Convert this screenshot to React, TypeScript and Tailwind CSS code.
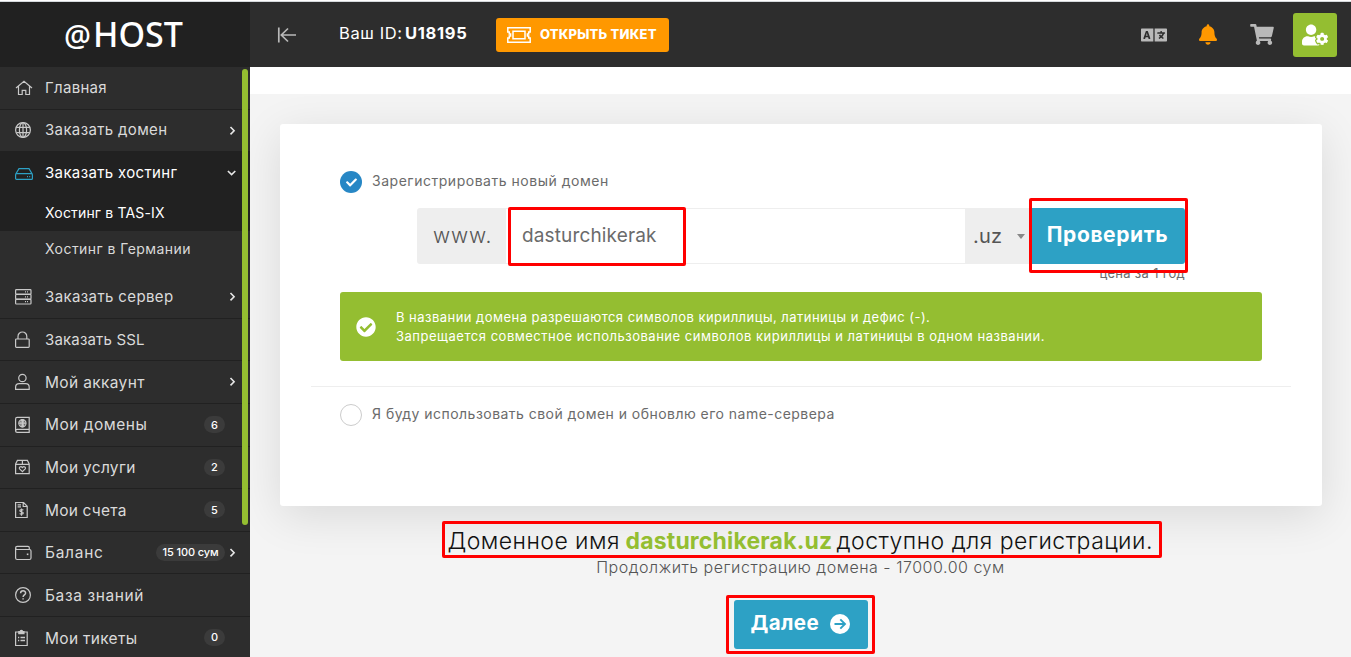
import type { ReactNode } from "react";
import { FaBell, FaCheck, FaCheckCircle, FaLanguage, FaShoppingCart, FaUserCog } from "react-icons/fa";

function Icon({ children, className = "" }: { children: ReactNode; className?: string }) {
  return (
    <svg width="18" height="18" viewBox="0 0 18 18" fill="none" stroke="currentColor" strokeWidth="1.2" className={`shrink-0 ${className}`}>
      {children}
    </svg>
  );
}

const icons = {
  home: <><path d="M1 9 9 2.3 17 9M3.5 7.3v8.2h3.7v-4.2h3.6v4.2h3.7V7.3" /></>,
  globe: <><circle cx="8" cy="9" r="7.4" /><ellipse cx="8" cy="9" rx="3.6" ry="7.4" /><path d="M8 1.500v15M1.300 6.300h13.400M1.300 11.700h13.400" /></>,
  drive: <><path d="M.6 9.2 4 3.6h10l3.4 5.6M1.6 8.6h14.8a1 1 0 0 1 1 1v3.8a1 1 0 0 1-1 1H1.6a1 1 0 0 1-1-1V9.6a1 1 0 0 1 1-1ZM12 11.6h1M14.2 11.6h1" /></>,
  server: <><rect x=".6" y="1.6" width="15.4" height="4.6" rx=".8" /><rect x=".6" y="6.5" width="15.4" height="4.6" rx=".8" /><rect x=".6" y="11.4" width="15.4" height="4.6" rx=".8" /><path d="M10 3.9h1M12 3.9h1M10 8.8h1M12 8.8h1M10 13.7h1M12 13.7h1" /></>,
  lock: <><rect x=".6" y="8" width="13.6" height="8.4" rx=".8" /><path d="M3 8V5.400a4.400 4.400 0 0 1 8.800 0V8" /></>,
  user: <><circle cx="7.400" cy="5" r="3.700" /><path d="M.6 16.400v-2.200c0-2.200 1.400-3.600 3.600-3.600h6.400c2.200 0 3.600 1.400 3.600 3.600v2.200Z" /></>,
  book: <><path d="M14.200 13.400H2.200C1.200 13.400.6 14 .6 15s.6 1.400 1.600 1.400h12V1.300h-12C1.200 1.300.6 2 .6 3v12" /><circle cx="7.400" cy="7.200" r="3.600" /><ellipse cx="7.400" cy="7.200" rx="1.500" ry="3.600" /><path d="M3.800 7.200h7.200M7.400 3.600v7.200" /></>,
  box: <><path d="M.6 6 2.400 2.400h10L14.200 6v9.600H.6ZM.6 6.400h13.600M7.400 2.400v3.800" /><path d="M7.400 13.600 4.600 10.900C3.600 9.600 5.600 7.500 7.400 9.500c1.800-2 3.800.1 2.800 1.400Z" /></>,
  invoice: <><path d="M.6 1.500h8l3.600 3.800v11.200H.6ZM8.200 1.500v4h4M2.600 3.900h3.400M2.600 5.900h3.400" /><path d="M8.300 9.300c-.4-.8-3.500-1-3.500.5 0 1.600 3.500.7 3.500 2.300 0 1.500-3.100 1.300-3.600.3M6.500 7.400v7.400" /></>,
  wallet: <><path d="M14.300 5V3.800c0-.9-.5-1.400-1.400-1.400H2.200C1.200 2.400.6 3 .6 4s.6 1.500 1.600 1.500h12.200c1 0 1.600.6 1.600 1.500v7c0 1-.6 1.500-1.600 1.500H2.200C1.200 15.500.6 15 .6 14V4" /><path strokeWidth="1.600" d="M11.800 10.300h1.600" /></>,
  help: <><circle cx="8" cy="9" r="7.400" /><path strokeWidth="1.500" d="M5.600 7.200c0-3.300 5-3.200 5-.2 0 2-2.500 1.900-2.500 4M8.100 12.200v1.400" /></>,
  clipboard: <><path d="M3.800 3H.6v13.500h11.600V3H9" /><path fill="currentColor" d="M3.800 2.600h1.400c0-1.600 2.400-1.600 2.400 0H9v2H3.800Z" /><path strokeWidth="1.500" d="M3 8.500h1.200M5.500 8.500h4.500M3 11.500h1.200M5.500 11.500h4.500" /></>,
};

function Chevron({ down = false }: { down?: boolean }) {
  return (
    <svg width="10" height="10" viewBox="0 0 10 10" fill="none" stroke="currentColor" strokeWidth="1.600" className="absolute top-[16px] right-[13px] text-[#e6e6e6]">
      {down ? <path d="m.9 3 3.700 3.600L8.300 3" /> : <path d="m3.500 1 3.600 3.700-3.600 3.700" />}
    </svg>
  );
}

interface RowProps {
  icon: keyof typeof icons;
  label: string;
  text: string;
  badge?: string;
  arrow?: boolean;
  wide?: boolean;
}

function Row({ icon, label, text, badge, arrow, wide }: RowProps) {
  return (
    <a className="relative flex h-[42.6px] shrink-0 items-center gap-3 border-b border-[#212121] pl-[15px] whitespace-nowrap text-[#dadada]">
      <Icon className="text-[#c8c8c8]">{icons[icon]}</Icon>
      <span className={text}>{label}</span>
      {badge && (
        <span className={`mr-[25px] ml-auto flex h-[17px] items-center justify-center rounded-full bg-[#3b3b3b] text-[11px] font-medium text-white ${wide ? "w-[69px] tracking-[-0.100px]" : "w-[21px]"}`}>
          {badge}
        </span>
      )}
      {arrow && <Chevron />}
    </a>
  );
}

function Sidebar() {
  return (
    <aside className="relative flex w-[250px] shrink-0 flex-col overflow-hidden bg-[#2d2d2d]">
      <div className="flex h-[65px] shrink-0 items-center bg-[#212121] pb-px pl-[64px] font-['Noto_Sans'] text-white">
        <span className="mt-[3px] text-[30px] leading-none font-medium">@</span>
        <span className="ml-[2px] text-[34px] leading-none font-medium">HOST</span>
      </div>
      <Row icon="home" label="Главная" text="text-[15px] tracking-[0.300px]" />
      <Row icon="globe" label="Заказать домен" text="text-[15px] tracking-[0.350px]" arrow />
      <div className="h-[79px] shrink-0 bg-[#212121] text-white">
        <a className="relative flex h-[43px] items-center gap-3 pl-[15px] text-[15px] whitespace-nowrap">
          <Icon className="text-[#2da1c5]">{icons.drive}</Icon>
          <span className="tracking-[0.350px]">Заказать хостинг</span>
          <Chevron down />
        </a>
        <a className="flex h-[35px] items-center pl-[45px] text-[14px] tracking-[0.170px]">Хостинг в TAS-IX</a>
      </div>
      <a className="mb-[10px] flex h-[35px] shrink-0 items-center pl-[45px] text-[14px] tracking-[0.450px] text-[#dadada]">Хостинг в Германии</a>
      <Row icon="server" label="Заказать сервер" text="pt-px text-[15px] tracking-[0.385px]" arrow />
      <Row icon="lock" label="Заказать SSL" text="pt-px text-[15px] tracking-[0.170px]" />
      <Row icon="user" label="Мой аккаунт" text="pt-px text-[15.500px] tracking-[0.350px]" arrow />
      <Row icon="book" label="Мои домены" text="text-[15.500px] tracking-[0.500px]" badge="6" />
      <Row icon="box" label="Мои услуги" text="pt-px text-[15.500px] tracking-[0.300px]" badge="2" />
      <Row icon="invoice" label="Мои счета" text="pt-px text-[15.500px] tracking-[0.200px]" badge="5" />
      <Row icon="wallet" label="Баланс" text="pt-px text-[15.500px] tracking-[0.700px]" badge="15 100 сум" wide arrow />
      <Row icon="help" label="База знаний" text="pt-px text-[15.500px] tracking-[0.600px]" />
      <Row icon="clipboard" label="Мои тикеты" text="pt-px text-[15.500px] tracking-[0.300px]" badge="0" />
      <div className="absolute top-[67px] left-[242px] h-[456px] w-[6px] rounded-full bg-[#94be31]" />
    </aside>
  );
}

function TopBar() {
  return (
    <header className="flex h-[65px] shrink-0 items-center bg-[#2d2d2d] pr-[14px] pl-[27px] text-[#b9b9b9]">
      <svg width="20" height="18" viewBox="0 0 20 18" fill="none" stroke="currentColor" strokeWidth="1.700">
        <path d="M1.800 1.500v15M19 9H4.500M11 2.500 4.300 9l6.700 6.500" />
      </svg>
      <div className="-mt-[3px] ml-[42px] flex w-[157px] text-[16.500px] whitespace-nowrap text-white">
        <span className="w-[66px] tracking-[0.600px]">Ваш ID:</span>
        <b className="tracking-[0.700px]">U18195</b>
      </div>
      <a className="flex h-[34px] w-[173px] items-center rounded-[3px] bg-[#ff9800] pl-[11px] text-white">
        <svg width="24" height="16" viewBox="0 0 24 16" fill="none" stroke="currentColor" strokeWidth="1.500">
          <path d="M.8.8h22.400v4.200h-1.500v2h-1.300v2h1.300v2h1.500v4.200H.8V11h1.500V9h1.300V7H2.300V5H.8Z" />
          <path d="M6 4.200h12v7.600H6Z" />
        </svg>
        <span className="ml-[9px] text-[13px] font-extrabold tracking-[0.200px] whitespace-nowrap">ОТКРЫТЬ ТИКЕТ</span>
      </a>
      <FaLanguage className="ml-auto h-[26px] w-[26px]" />
      <FaBell className="ml-[32px] h-[21px] w-[18px] text-[#ff9800]" />
      <FaShoppingCart className="ml-[33px] h-[21px] w-[24px]" />
      <a className="ml-[19px] flex h-[44px] w-[44px] items-center justify-center rounded-[3px] bg-[#94be31] text-white">
        <FaUserCog className="h-[26px] w-[26px]" />
      </a>
    </header>
  );
}

function DomainCard() {
  return (
    <div className="mt-[30px] mr-[29px] ml-[30px] flex h-[382px] shrink-0 flex-col rounded-[3px] bg-white pt-[47px] text-[#6b6b6b] shadow-[0_10px_45px_rgba(0,0,0,0.11)]">
      <label className="ml-[60px] flex h-[22px] items-center gap-[10px]">
        <span className="flex h-[22px] w-[22px] items-center justify-center rounded-full bg-[#2787c5] text-white">
          <FaCheck className="h-[11px] w-[11px]" />
        </span>
        <span className="-mt-[4px] text-[14px] tracking-[0.520px]">Зарегистрировать новый домен</span>
      </label>
      <div className="mt-[15px] ml-[137px] flex h-[56px] w-[768px]">
        <div className="flex w-[89px] items-center rounded-l-[3px] bg-[#eee] pl-4 text-[21px] font-light tracking-[0.900px] text-[#555]">www.</div>
        <div className="relative flex w-[459px] items-center border-y border-[#eee] pl-4 text-[19px] tracking-[0.140px]">
          dasturchikerak
          <div className="absolute -top-[2px] left-[2px] h-[59px] w-[178px] rounded-[2px] border-[3px] border-[#ff0000]" />
        </div>
        <div className="flex w-[65px] items-center justify-between bg-[#eee] pr-[5px] pl-[8px] text-[20px] tracking-[0.200px] text-[#555]">
          .uz
          <span className="h-0 w-0 border-x-[4px] border-t-[5px] border-x-transparent border-t-[#888]" />
        </div>
        <div className="relative flex w-[155px] items-center justify-center rounded-r-[3px] bg-[#2da1c5] pb-[2px] text-[21px] font-bold tracking-[0.600px] text-white">
          Проверить
          <div className="absolute -top-[10px] -left-[1px] z-10 h-[75px] w-[159px] rounded-[2px] border-[3px] border-[#ff0000]" />
        </div>
      </div>
      <div className="flex h-7 w-[905px] justify-end text-[13px] leading-[18px] tracking-[0.300px]">цена за 1 год</div>
      <div className="ml-[60px] flex h-[69px] w-[922px] items-center gap-[20px] rounded-[3px] bg-[#94be31] pl-4 text-[13px] text-white">
        <FaCheckCircle className="h-5 w-5 shrink-0" />
        <div>
          <p className="leading-[19px] tracking-[0.470px] whitespace-nowrap">В названии домена разрешаются символов кириллицы, латиницы и дефис (-).</p>
          <p className="leading-[19px] tracking-[0.515px] whitespace-nowrap">Запрещается совместное использование символов кириллицы и латиницы в одном названии.</p>
        </div>
      </div>
      <hr className="mx-[31px] mt-[25px] border-[#eee]" />
      <label className="mt-[17px] ml-[60px] flex h-[22px] items-center gap-[10px]">
        <span className="h-[22px] w-[22px] rounded-full border border-[#ccc]" />
        <span className="-mt-[4px] text-[14px] tracking-[0.465px]">Я буду использовать свой домен и обновлю его name-сервера</span>
      </label>
    </div>
  );
}

function Result() {
  return (
    <div className="relative z-10 flex flex-col items-center whitespace-nowrap">
      <div className="mt-[15px] ml-[2px] flex h-[37px] w-[720px] items-center rounded-[2px] border-[3px] border-[#ff0000] pt-[3px] pl-[3px] text-[23px] text-[#111]">
        <span className="w-[178px] font-light tracking-[0.450px]">Доменное имя</span>
        <b className="w-[211px] tracking-[0.180px] text-[#94be31]">dasturchikerak.uz</b>
        <span className="font-light tracking-[0.480px]">доступно для регистрации.</span>
      </div>
      <p className="mt-[-3px] h-[40px] text-[16px] leading-[24px] font-light tracking-[0.520px] text-[#555]">Продолжить регистрацию домена - 17000.00 сум</p>
      <div className="flex h-[59px] w-[149px] items-center justify-center rounded-[2px] border-[3px] border-[#ff0000]">
        <a className="flex h-[49px] w-[134px] items-center gap-[11px] rounded-[3px] bg-[#2da1c5] pb-[2px] pl-[17px] text-[20.500px] font-bold tracking-[0.400px] text-white">
          Далее
          <svg width="20" height="20" viewBox="0 0 20 20" fill="none">
            <circle cx="10" cy="10" r="10" fill="currentColor" />
            <path d="M4.500 10h10.200M10.300 5.300 15 10l-4.700 4.700" stroke="#2da1c5" strokeWidth="1.900" />
          </svg>
        </a>
      </div>
    </div>
  );
}

export default function App() {
  return (
    <div className="flex h-[657px] w-[1351px] flex-col overflow-hidden bg-white font-[Inter,sans-serif]">
      <div className="h-[2px] shrink-0 border-b border-[#d5d9dc] bg-white" />
      <div className="flex min-h-0 flex-1">
        <Sidebar />
        <div className="flex w-[1101px] flex-col">
          <TopBar />
          <div className="h-[27px] shrink-0 bg-white" />
          <main className="flex min-h-0 flex-1 flex-col overflow-hidden bg-[#f4f4f4]">
            <DomainCard />
            <Result />
          </main>
        </div>
      </div>
    </div>
  );
}
